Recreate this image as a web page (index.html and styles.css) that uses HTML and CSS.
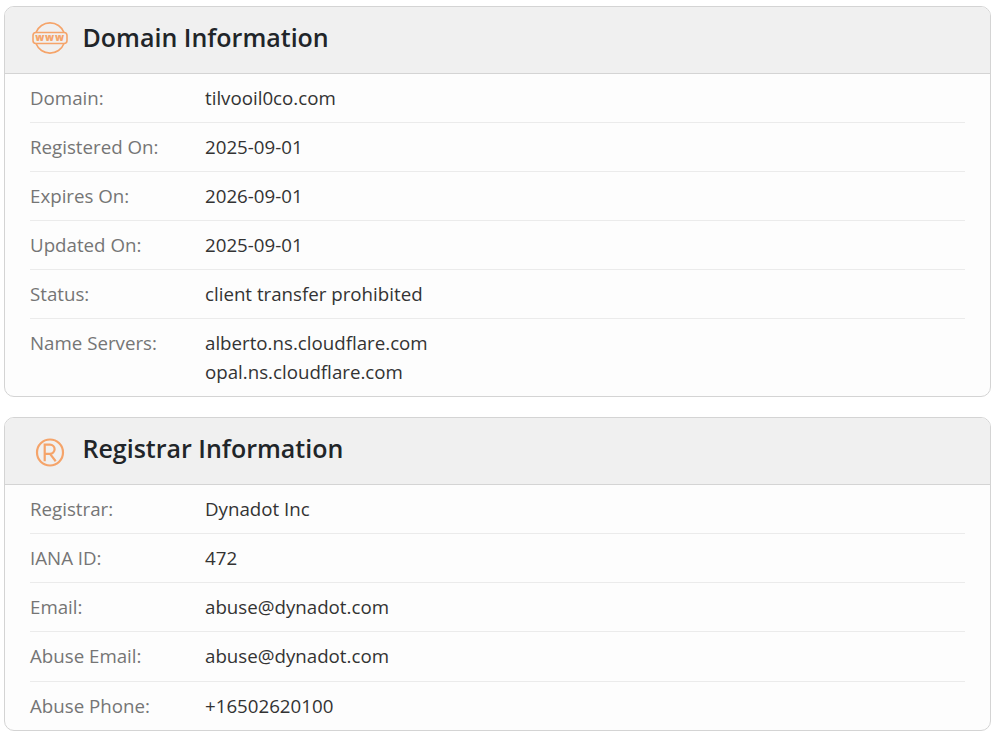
FILE: index.html
```html
<!DOCTYPE html>
<html lang="en">
<head>
<meta charset="utf-8">
<title>Domain Information</title>
<link rel="stylesheet" href="styles.css">
</head>
<body>
<section class="card">
  <header class="card-head">
    <svg class="icon" viewBox="0 0 36 32" aria-hidden="true">
      <path class="ln" d="M4 10.5A15 15 0 0 1 32 10.5M4 21.5A15 15 0 0 0 32 21.5"/>
      <rect class="ln" x="1" y="10.5" width="34" height="11" rx="3"/>
      <text class="www" x="18" y="18.8" text-anchor="middle">www</text>
    </svg>
    <h2 class="card-title">Domain Information</h2>
  </header>
  <div class="rows">
    <div class="row"><div class="label">Domain:</div><div class="value">tilvooil0co.com</div></div>
    <div class="row"><div class="label">Registered On:</div><div class="value">2025-09-01</div></div>
    <div class="row"><div class="label">Expires On:</div><div class="value">2026-09-01</div></div>
    <div class="row"><div class="label">Updated On:</div><div class="value">2025-09-01</div></div>
    <div class="row"><div class="label">Status:</div><div class="value">client transfer prohibited</div></div>
    <div class="row"><div class="label">Name Servers:</div><div class="value">alberto.ns.cloudflare.com<br>opal.ns.cloudflare.com</div></div>
  </div>
</section>
<section class="card">
  <header class="card-head">
    <svg class="icon" viewBox="0 0 36 32" aria-hidden="true">
      <circle class="ln ln-r" cx="18" cy="19.5" r="13"/>
      <path class="ln ln-r" d="M12.7 28.2V11.7H18a4.6 4.6 0 0 1 0 9.2H12.7M18 20.9L23.7 28.2"/>
    </svg>
    <h2 class="card-title">Registrar Information</h2>
  </header>
  <div class="rows">
    <div class="row"><div class="label">Registrar:</div><div class="value">Dynadot Inc</div></div>
    <div class="row"><div class="label">IANA ID:</div><div class="value">472</div></div>
    <div class="row"><div class="label">Email:</div><div class="value">abuse@dynadot.com</div></div>
    <div class="row row-wide"><div class="label">Abuse Email:</div><div class="value">abuse@dynadot.com</div></div>
    <div class="row"><div class="label">Abuse Phone:</div><div class="value">+16502620100</div></div>
  </div>
</section>
</body>
</html>
```
FILE: styles.css
```css
* { box-sizing: border-box; }
html, body { margin: 0; padding: 0; background: #fff; }
body {
  padding: 6px 10px 0 4px;
  font-family: "Open Sans", sans-serif;
  font-size: 18.72px;
  line-height: 29px;
  color: #333;
}
.card {
  border: 1px solid #d4d4d4;
  border-radius: 10px;
  background: #fdfdfd;
  overflow: hidden;
  margin-bottom: 20px;
}
.card-head {
  display: flex;
  align-items: center;
  gap: 14.5px;
  height: 67px;
  padding: 0 0 5px 27px;
  background: #f0f0f0;
  border-bottom: 1px solid #d4d4d4;
}
.icon { width: 36px; height: 32px; flex: none; overflow: visible; }
.ln { fill: none; stroke: #f5a46a; stroke-width: 1.6; }
.ln-r { stroke-width: 2.2; }
.www { font-family: "Open Sans", sans-serif; font-size: 10px; font-weight: 800; fill: #f5a46a; letter-spacing: 0.8px; }
.card-title {
  margin: 0 0 2px;
  font-size: 25px;
  line-height: 32px;
  font-weight: 600;
  color: #212529;
}
.rows { padding: 0 25px; }
.row {
  display: flex;
  padding: 9px 0 10px;
  border-bottom: 1px solid #ebebeb;
}
.row-wide { padding-bottom: 11px; }
.row:last-child { border-bottom: 0; }
.label { width: 175px; flex: none; color: #757575; }
.value { color: #333; }
```
